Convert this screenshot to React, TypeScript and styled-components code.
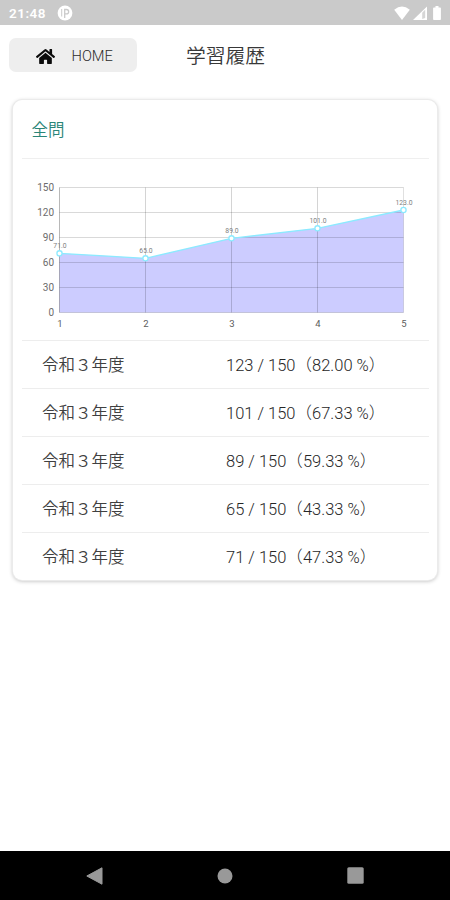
import React from "react";
import styled, { createGlobalStyle } from "styled-components";
import { FaHome } from "react-icons/fa";

const GlobalStyle = createGlobalStyle`
  * { box-sizing: border-box; }
  body {
    margin: 0;
    background: #fff;
    font-family: Roboto, "Noto Sans CJK JP", sans-serif;
    color: #333;
  }
`;

const Screen = styled.div`
  display: flex;
  flex-direction: column;
  width: 450px;
  height: 900px;
  overflow: hidden;
  background: #fff;
`;

const StatusBar = styled.div`
  display: flex;
  align-items: center;
  flex: none;
  height: 25px;
  padding: 1px 6px 0 9px;
  background: #cacaca;
  color: #fff;
`;

const Clock = styled.span`
  width: 48px;
  font-size: 13.5px;
  font-weight: 600;
  line-height: 22px;
  letter-spacing: 0.5px;
`;

const StatusIcons = styled.div`
  display: flex;
  gap: 3px;
  margin-left: auto;
`;

const Header = styled.header`
  display: flex;
  align-items: center;
  flex: none;
  height: 60px;
  padding-left: 9px;
`;

const HomeButton = styled.button`
  display: flex;
  align-items: center;
  width: 128px;
  height: 34px;
  padding: 2px 0 0 27px;
  border: 0;
  border-radius: 7px;
  background: #eee;
  color: #2c2c2c;
  font: 300 14.7px/18px Roboto, sans-serif;

  svg {
    margin-right: 16.5px;
    color: #0c0c0c;
  }
`;

const Title = styled.h1`
  margin: 3px 0 0 49px;
  font-size: 19.8px;
  font-weight: 350;
  line-height: 30px;
  color: #383838;
`;

const Card = styled.section`
  flex: none;
  width: 424px;
  height: 480px;
  margin: 15px 0 0 13px;
  padding: 0 8px 0 9px;
  border-radius: 9px;
  background: #fff;
  box-shadow: 0 0 0 1px #ebebeb, 0 1px 4px rgba(0, 0, 0, 0.3);
`;

const CardTitle = styled.h2`
  height: 59px;
  margin: 0;
  padding: 2px 0 0 9.5px;
  border-bottom: 1px solid #efefef;
  font-size: 16.5px;
  font-weight: 350;
  line-height: 58px;
  color: #2a8578;
`;

const ChartArea = styled.div`
  height: 181px;

  svg {
    display: block;
  }
`;

const Row = styled.div`
  display: grid;
  grid-template-columns: 184px 1fr;
  align-items: center;
  height: 48px;
  padding: 3px 0 0 20px;
  border-top: 1px solid #ededed;
  font-size: 16.5px;
  line-height: 24px;
  white-space: pre;
`;

const Year = styled.span`
  font-weight: 350;
  color: #404040;
`;

const Score = styled.span`
  font-weight: 300;
  color: #262626;
`;

const NavBar = styled.nav`
  display: flex;
  align-items: center;
  justify-content: space-between;
  flex: none;
  height: 49px;
  margin-top: auto;
  padding: 0 86px;
  background: #000;
`;

const results = [
  { score: 71, percent: "47.33" },
  { score: 65, percent: "43.33" },
  { score: 89, percent: "59.33" },
  { score: 101, percent: "67.33" },
  { score: 123, percent: "82.00" },
];

const LEFT = 37.5;
const RIGHT = 381.5;
const BASE = 153.5;
const STEP = (RIGHT - LEFT) / 4;
const xAt = (i: number) => LEFT + i * STEP;
const yAt = (v: number) => BASE - (v / 150) * 125;

function ScoreChart() {
  const line = results.map((r, i) => `${xAt(i)},${yAt(r.score)}`).join(" ");
  return (
    <svg width="407" height="181" viewBox="0 0 407 181" fontFamily="Roboto, sans-serif">
      <polygon points={`${LEFT},${BASE} ${line} ${RIGHT},${BASE}`} fill="#ccccff" />
      {[0, 30, 60, 90, 120, 150].map((v) => (
        <g key={v}>
          <line x1={LEFT} x2={RIGHT} y1={yAt(v)} y2={yAt(v)} stroke="#000" strokeOpacity="0.15" />
          <text x="32.3" y={yAt(v) + 3.5} textAnchor="end" fontSize="10" letterSpacing="0.1" fill="#6c6c6c">
            {v}
          </text>
        </g>
      ))}
      {results.map((_, i) => (
        <g key={i}>
          <line
            x1={xAt(i)}
            x2={xAt(i)}
            y1={yAt(150)}
            y2={BASE}
            stroke="#000"
            strokeOpacity={i === 0 ? 0.28 : i === 4 ? 0.12 : 0.17}
          />
          <text x={xAt(i) + 0.3} y="167.5" textAnchor="middle" fontSize="9.5" fill="#5c5c5c">
            {i + 1}
          </text>
        </g>
      ))}
      <polyline points={line} fill="none" stroke="#8ceaff" strokeWidth="1.4" />
      {results.map((r, i) => (
        <g key={i}>
          <circle cx={xAt(i)} cy={yAt(r.score)} r="2.6" fill="#fff" stroke="#8ceaff" strokeWidth="1.3" />
          <text x={xAt(i) + 0.5} y={yAt(r.score) - 5.5} textAnchor="middle" fontSize="6.8" fill="#808080">
            {r.score.toFixed(1)}
          </text>
        </g>
      ))}
    </svg>
  );
}

export default function App() {
  return (
    <Screen>
      <GlobalStyle />
      <StatusBar>
        <Clock>21:48</Clock>
        <svg width="16" height="16" viewBox="0 0 16 16">
          <circle cx="8" cy="8" r="7.4" fill="#fff" />
          <path d="M4.7 4v7.5" stroke="#cacaca" strokeWidth="1" />
          <path d="M7.7 13V4.5H9.5a2 2 0 0 1 0 4.3H8" fill="none" stroke="#cacaca" strokeWidth="1.3" />
        </svg>
        <StatusIcons>
          <svg width="16" height="15" viewBox="0 0 16 15">
            <path d="M.2 3.8Q8-2.7 15.8 3.8L8 14Z" fill="#fff" />
          </svg>
          <svg width="14" height="15" viewBox="0 0 14 15">
            <path d="M0 14 14 .5V14Z" fill="#fff" />
            <path d="M9.2 6.8 12.2 3.7V12L9.2 13Z" fill="#d6d6d6" />
          </svg>
          <svg width="14" height="15" viewBox="0 0 14 15">
            <path d="M5.5 0h3v1.4h1.6q.8 0 .8.8V13.2q0 .8-.8.8H3.9q-.8 0-.8-.8V2.2q0-.8.8-.8h1.6Z" fill="#fff" />
          </svg>
        </StatusIcons>
      </StatusBar>
      <Header>
        <HomeButton>
          <FaHome size={19} />
          HOME
        </HomeButton>
        <Title>学習履歴</Title>
      </Header>
      <Card>
        <CardTitle>全問</CardTitle>
        <ChartArea>
          <ScoreChart />
        </ChartArea>
        {[...results].reverse().map((r) => (
          <Row key={r.score}>
            <Year>令和３年度</Year>
            <Score>
              {r.score} / 150（{r.percent} %）
            </Score>
          </Row>
        ))}
      </Card>
      <NavBar>
        <svg width="17" height="18" viewBox="0 0 17 18">
          <path d="M.8 9 16 .8V17.2Z" fill="#999" stroke="#999" strokeLinejoin="round" />
        </svg>
        <svg width="16" height="16" viewBox="0 0 16 16">
          <circle cx="8" cy="8" r="7.5" fill="#999" />
        </svg>
        <svg width="17" height="17" viewBox="0 0 17 17">
          <rect x=".3" y=".3" width="16.4" height="16.4" rx="1.5" fill="#999" />
        </svg>
      </NavBar>
    </Screen>
  );
}
